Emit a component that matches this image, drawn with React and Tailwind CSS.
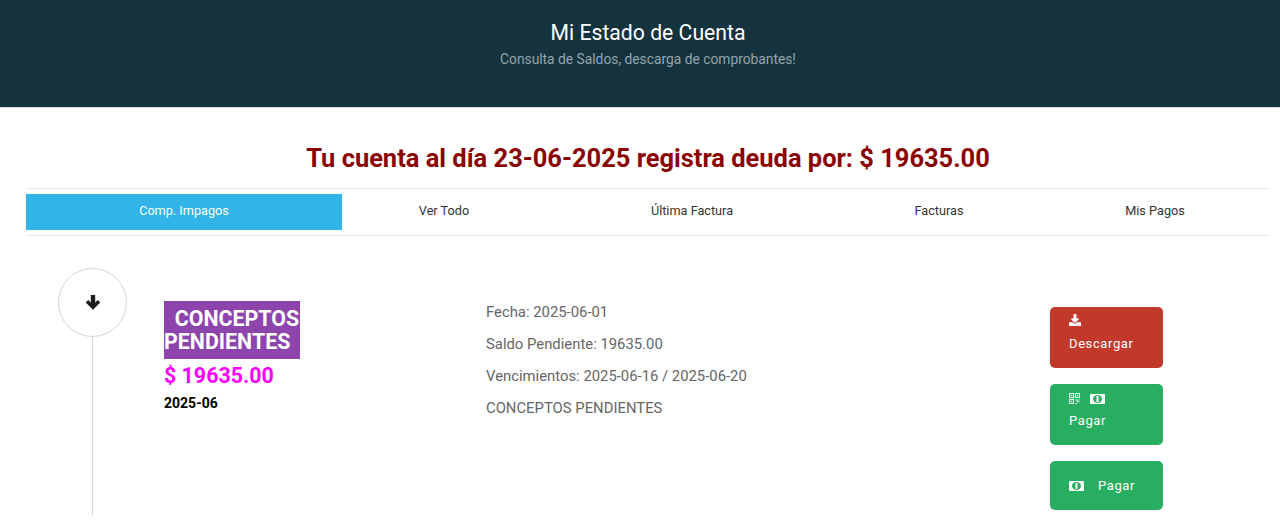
import { FaDownload } from 'react-icons/fa'

const tabs = [
  { label: 'Comp. Impagos', width: 'w-[316px]', active: true },
  { label: 'Ver Todo', width: 'w-[204px]' },
  { label: 'Última Factura', width: 'w-[292px]' },
  { label: 'Facturas', width: 'w-[202px]' },
  { label: 'Mis Pagos', width: 'w-[230px]' },
]

const details = [
  'Fecha: 2025-06-01',
  'Saldo Pendiente: 19635.00',
  'Vencimientos: 2025-06-16 / 2025-06-20',
  'CONCEPTOS PENDIENTES',
]

function ArrowIcon() {
  return (
    <svg viewBox="0 0 16 16" className="mb-[2px] h-[16px] w-[16px] text-[#1c1c1c]" fill="none" stroke="currentColor">
      <path d="M8 1v12" strokeWidth="4.4" />
      <path d="M2 7.2l6 6 6-6" strokeWidth="3.6" />
    </svg>
  )
}

function MoneyIcon() {
  return (
    <svg viewBox="0 0 15 10" className="h-[10px] w-[15px]">
      <rect width="15" height="10" rx="1" fill="white" />
      <ellipse cx="7.5" cy="5" rx="4.5" ry="4" fill="#27ae60" />
      <rect x="6.5" y="2" width="2" height="6" fill="white" />
    </svg>
  )
}

function QrIcon() {
  return (
    <svg viewBox="0 0 12 12" className="h-[11px] w-[11px]" fill="none" stroke="white">
      <rect x="0.5" y="0.5" width="4.5" height="4.5" />
      <rect x="7" y="0.5" width="4.5" height="4.5" />
      <rect x="0.5" y="7" width="4.5" height="4.5" />
      <path d="M7 7.5h2v2h2.5M7 11.5h2M11.5 7v1" />
      <rect x="2" y="2" width="1.5" height="1.5" fill="white" stroke="none" />
      <rect x="8.5" y="2" width="1.5" height="1.5" fill="white" stroke="none" />
      <rect x="2" y="8.5" width="1.5" height="1.5" fill="white" stroke="none" />
    </svg>
  )
}

export default function App() {
  return (
    <div className="h-[521px] overflow-hidden bg-white font-['Roboto',sans-serif]">
      <header className="h-[108px] border-b border-[#d8dde0] bg-[#15333f] pl-[16px] pt-[19px] text-center">
        <h1 className="text-[21.2px] leading-[28px] text-white">Mi Estado de Cuenta</h1>
        <p className="mt-[2px] text-[13.8px] leading-[20px] text-[#92a5aa]">Consulta de Saldos, descarga de comprobantes!</p>
      </header>

      <h2 className="mt-[33px] pl-[16px] text-center text-[25.45px] font-bold leading-[34px] text-[#8b0000]">
        Tu cuenta al día 23-06-2025 registra deuda por: $ 19635.00
      </h2>

      <nav className="ml-[26px] mr-[10px] mt-[13px] flex h-[48px] items-center border-y border-[#e6e6e6]">
        {tabs.map((tab) => (
          <a
            key={tab.label}
            className={`${tab.width} flex h-[36px] items-center justify-center pb-[2px] text-[12.7px] ${
              tab.active ? 'bg-[#31b4e8] text-white' : 'text-[#333333]'
            }`}
          >
            {tab.label}
          </a>
        ))}
      </nav>

      <section className="mt-[32px] flex">
        <div className="ml-[58px] flex w-[69px] shrink-0 flex-col items-center">
          <div className="flex h-[69px] w-[69px] items-center justify-center rounded-full border border-[#d4d4d4] bg-white">
            <ArrowIcon />
          </div>
          <div className="h-[178px] w-px bg-[#d4d4d4]" />
        </div>

        <div className="ml-[37px] mt-[33px] w-[136px] shrink-0">
          <div className="h-[58px] bg-[#8e44ad] pt-[6px] text-[21.4px] font-bold leading-[23px] text-white">
            <span className="whitespace-pre">  CONCEPTOS</span>
            <br />
            PENDIENTES
          </div>
          <p className="mt-[2px] text-[21.4px] font-bold leading-[30px] text-[#ff00ff]">$ 19635.00</p>
          <p className="mt-[2px] text-[14px] font-bold leading-[20px] text-black">2025-06</p>
        </div>

        <div className="ml-[186px] mt-[28px] w-[564px] shrink-0 text-[14.85px] leading-[32px] text-[#666666]">
          {details.map((line) => (
            <p key={line}>{line}</p>
          ))}
        </div>

        <div className="mt-[39px] flex w-[113px] shrink-0 flex-col gap-[16px] text-[13px] tracking-[0.6px] text-white">
          <button className="flex h-[61px] flex-col items-start rounded-[5px] bg-[#c0392b] pl-[19px] pt-[7px]">
            <FaDownload className="text-[12px]" />
            <span className="mt-[8px] block leading-[20px]">Descargar</span>
          </button>
          <button className="flex h-[61px] flex-col items-start rounded-[5px] bg-[#27ae60] pl-[19px] pt-[9px]">
            <span className="flex items-center gap-[10px]">
              <QrIcon />
              <MoneyIcon />
            </span>
            <span className="mt-[7px] block leading-[20px]">Pagar</span>
          </button>
          <button className="flex h-[49px] items-center gap-[14px] rounded-[5px] bg-[#27ae60] pl-[19px]">
            <MoneyIcon />
            <span>Pagar</span>
          </button>
        </div>
      </section>
    </div>
  )
}
